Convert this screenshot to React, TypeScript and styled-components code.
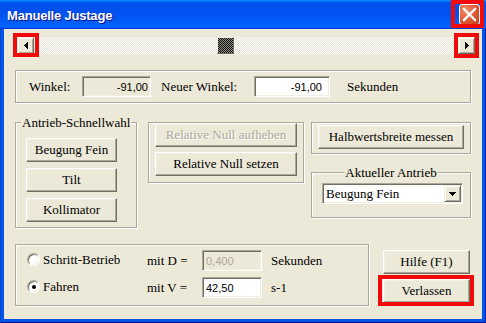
import React from 'react';
import styled, { createGlobalStyle } from 'styled-components';

const Global = createGlobalStyle`
  html, body { margin: 0; padding: 0; background: #0055ea; }
  body {
    width: 486px; height: 323px; overflow: hidden;
    font-family: "Liberation Serif", "Times New Roman", serif;
    font-size: 13px; color: #000;
  }
  * { box-sizing: border-box; }
`;

const Window = styled.div`
  position: relative;
  width: 486px;
  height: 323px;
  display: flex;
  flex-direction: column;
`;

const TitleBar = styled.div`
  flex: none;
  height: 29px;
  display: flex;
  align-items: flex-start;
  background: linear-gradient(180deg, #0997ff 0%, #0053ee 9%, #0050ee 40%, #0060fb 86%, #0063fd 92%, #005bff 95%, #003dd7 97%, #003dd7 100%);
`;

const Title = styled.span`
  margin: 8px 0 0 7px;
  font: bold 13px/16px "Liberation Sans", Arial, sans-serif;
  letter-spacing: -0.2px;
  color: #fff;
  text-shadow: 1px 1px #0f1089;
`;

const CloseButton = styled.button`
  margin: 4px 6px 0 auto;
  width: 21px;
  height: 21px;
  padding: 0;
  display: flex;
  align-items: center;
  justify-content: center;
  border: 1px solid #fff;
  border-radius: 3px;
  background: radial-gradient(circle at 30% 30%, #f0906c 0%, #e2603f 45%, #d24621 80%, #c13a17 100%);
`;

const Frame = styled.div`
  flex: 1;
  display: flex;
  padding: 0 4px 4px;
  background: #0055ea;
  box-shadow: inset 1px 0 #0a43c8, inset -1px 0 #00209c, inset 0 -1px #00138c;
`;

const Client = styled.div`
  flex: 1;
  display: flex;
  flex-direction: column;
  align-items: flex-start;
  padding: 8px 11px 0;
  background: #ece9d8;
`;

/* ---------- scrollbar ---------- */

const ScrollBar = styled.div`
  display: flex;
  align-self: stretch;
  height: 17px;
  margin: 0 -4px 0 2px;
`;

const Raised = styled.span`
  display: flex;
  align-items: center;
  justify-content: center;
  background: #ece9d8;
  border: 1px solid;
  border-color: #f1efe2 #716f64 #716f64 #f1efe2;
  box-shadow: inset 1px 1px #fff, inset -1px -1px #aca899;
`;

const ScrollArrow = styled(Raised)`
  flex: none;
  width: 17px;
  height: 17px;
`;

const Track = styled.div`
  flex: 1;
  display: flex;
  background-color: #ece9d8;
  background-image: conic-gradient(#fff 25%, #e6e3d4 0 50%, #fff 0 75%, #e6e3d4 0);
  background-size: 2px 2px;
`;

const Thumb = styled.span<{ $offset: number }>`
  width: 17px;
  height: 17px;
  margin-left: ${(p) => p.$offset}px;
  border: 1px solid;
  border-color: #f1efe2 #716f64 #716f64 #f1efe2;
  background-color: #000;
  background-image: conic-gradient(#8d8b82 25%, #111 0 50%, #8d8b82 0 75%, #111 0);
  background-size: 2px 2px;
`;

/* ---------- groups ---------- */

const Group = styled.div<{ $w: number; $h: number }>`
  position: relative;
  flex: none;
  width: ${(p) => p.$w}px;
  height: ${(p) => p.$h}px;
  border: 1px solid #aca899;
  box-shadow: inset 1px 1px #fff, 1px 1px #fff;
`;

const Legend = styled.span<{ $center?: boolean }>`
  position: absolute;
  top: -8px;
  left: ${(p) => (p.$center ? '50%' : '5px')};
  transform: ${(p) => (p.$center ? 'translateX(-50%)' : 'none')};
  padding: 0 1px;
  line-height: 15px;
  white-space: nowrap;
  background: #ece9d8;
`;

const AngleGroup = styled(Group)`
  margin-top: 16px;
  display: flex;
  align-items: center;
  padding-left: 13px;
`;

const Label = styled.span<{ $w?: number; $ml?: number }>`
  flex: none;
  width: ${(p) => (p.$w ? `${p.$w}px` : 'auto')};
  margin-left: ${(p) => p.$ml ?? 0}px;
  white-space: nowrap;
  line-height: 15px;
`;

const Field = styled.input<{ $w: number; $ghost?: boolean; $align?: 'left' | 'right'; $pad?: number }>`
  flex: none;
  width: ${(p) => p.$w}px;
  height: 21px;
  margin: 0;
  padding: 0 ${(p) => (p.$align === 'left' ? 0 : p.$pad ?? 3)}px 0 ${(p) => (p.$align === 'left' ? p.$pad ?? 3 : 0)}px;
  text-align: ${(p) => p.$align ?? 'right'};
  font: 11px "Liberation Sans", Arial, sans-serif;
  color: ${(p) => (p.disabled ? '#aca899' : '#000')};
  background: ${(p) => (p.$ghost || p.disabled ? '#ece9d8' : '#fff')};
  border: 1px solid;
  border-color: #aca899 #fff #fff #aca899;
  box-shadow: inset 1px 1px #716f64, inset -1px -1px #f1efe2;
  outline: none;
  &:disabled { -webkit-text-fill-color: #aca899; opacity: 1; }
`;

/* ---------- buttons ---------- */

const Button = styled.button<{ $w: number }>`
  flex: none;
  width: ${(p) => p.$w}px;
  height: 24px;
  padding: 0;
  font: 13px "Liberation Serif", "Times New Roman", serif;
  color: #000;
  white-space: nowrap;
  background: #ece9d8;
  border: 1px solid;
  border-color: #fff #716f64 #716f64 #fff;
  box-shadow: inset -1px -1px #aca899, inset 1px 1px #f1efe2;
  &:disabled {
    color: #aca899;
    text-shadow: 1px 1px #fff;
  }
`;

const MiddleRow = styled.div`
  display: flex;
  align-items: flex-start;
  margin-top: 19px;
`;

const QuickGroup = styled(Group)`
  display: flex;
  flex-direction: column;
  gap: 6px;
  padding: 15px 0 0 10px;
`;

const NullGroup = styled(Group)`
  margin-left: 11px;
  display: flex;
  flex-direction: column;
  gap: 5px;
  padding: 0 0 0 6px;
`;

const RightColumn = styled.div`
  display: flex;
  flex-direction: column;
  margin-left: 7px;
`;

const FwhmGroup = styled(Group)`
  padding: 2px 0 0 6px;
`;

const DriveGroup = styled(Group)`
  margin-top: 18px;
  padding: 10px 0 0 10px;
`;

const Combo = styled.div`
  width: 141px;
  height: 21px;
  display: flex;
  align-items: stretch;
  padding: 1px;
  background: #fff;
  border: 1px solid;
  border-color: #aca899 #fff #fff #aca899;
  box-shadow: inset 1px 1px #716f64, inset -1px -1px #f1efe2;
`;

const ComboText = styled.span`
  flex: 1;
  padding-left: 2px;
  line-height: 17px;
  white-space: nowrap;
`;

const DropButton = styled(Raised)`
  flex: none;
  width: 17px;
`;

/* ---------- bottom ---------- */

const BottomRow = styled.div`
  display: flex;
  align-items: flex-start;
  margin-top: 16px;
`;

const ModeGroup = styled(Group)`
  display: grid;
  grid-template-columns: 120px 55px 60px auto;
  grid-auto-rows: 21px;
  row-gap: 6px;
  align-items: center;
  padding: 5px 0 0 11px;
`;

const RadioLabel = styled.label`
  display: flex;
  align-items: center;
  gap: 3px;
  line-height: 15px;
  white-space: nowrap;
  margin-top: -2px;
`;

const Radio = styled.span<{ $checked?: boolean }>`
  position: relative;
  flex: none;
  width: 13px;
  height: 13px;
  border-radius: 50%;
  background: #fff;
  border: 1px solid;
  border-color: #aca899 #fff #fff #aca899;
  box-shadow: inset 1px 1px #716f64, inset -1px -1px #f1efe2;
  &::after {
    content: '';
    display: ${(p) => (p.$checked ? 'block' : 'none')};
    position: absolute;
    left: 3.5px;
    top: 3.5px;
    width: 4px;
    height: 4px;
    border-radius: 50%;
    background: #000;
  }
`;

const Unit = styled.span`
  margin-left: 9px;
  line-height: 15px;
  white-space: nowrap;
`;

const ButtonColumn = styled.div`
  display: flex;
  flex-direction: column;
  gap: 5px;
  margin: 6px 0 0 14px;
`;

/* ---------- annotation marks ---------- */

const Highlight = styled.span<{ $x: number; $y: number; $w: number; $h: number }>`
  position: absolute;
  left: ${(p) => p.$x}px;
  top: ${(p) => p.$y}px;
  width: ${(p) => p.$w}px;
  height: ${(p) => p.$h}px;
  border: 4px solid #f00a0a;
  pointer-events: none;
`;

const LeftGlyph = () => (
  <svg width="4" height="7" viewBox="0 0 4 7" shapeRendering="crispEdges">
    <rect x="0" y="3" width="1" height="1" fill="#000" />
    <rect x="1" y="2" width="1" height="3" fill="#000" />
    <rect x="2" y="1" width="1" height="5" fill="#000" />
    <rect x="3" y="0" width="1" height="7" fill="#000" />
  </svg>
);

const RightGlyph = () => (
  <svg width="4" height="7" viewBox="0 0 4 7" shapeRendering="crispEdges">
    <rect x="3" y="3" width="1" height="1" fill="#000" />
    <rect x="2" y="2" width="1" height="3" fill="#000" />
    <rect x="1" y="1" width="1" height="5" fill="#000" />
    <rect x="0" y="0" width="1" height="7" fill="#000" />
  </svg>
);

const DownGlyph = () => (
  <svg width="7" height="4" viewBox="0 0 7 4" shapeRendering="crispEdges">
    <rect x="0" y="0" width="7" height="1" fill="#000" />
    <rect x="1" y="1" width="5" height="1" fill="#000" />
    <rect x="2" y="2" width="3" height="1" fill="#000" />
    <rect x="3" y="3" width="1" height="1" fill="#000" />
  </svg>
);

const CloseGlyph = () => (
  <svg width="19" height="19" viewBox="0 0 19 19">
    <path d="M4 4 L15 15 M15 4 L4 15" stroke="#fff" strokeWidth="2.3" strokeLinecap="square" />
  </svg>
);

export default function App() {
  return (
    <>
      <Global />
      <Window>
        <TitleBar>
          <Title>Manuelle Justage</Title>
          <CloseButton aria-label="Schließen">
            <CloseGlyph />
          </CloseButton>
        </TitleBar>
        <Frame>
          <Client>
            <ScrollBar>
              <ScrollArrow>
                <LeftGlyph />
              </ScrollArrow>
              <Track>
                <Thumb $offset={183} />
              </Track>
              <ScrollArrow>
                <RightGlyph />
              </ScrollArrow>
            </ScrollBar>

            <AngleGroup $w={456} $h={33}>
              <Label $w={53}>Winkel:</Label>
              <Field $w={69} $ghost readOnly value="-91,00" $pad={2} />
              <Label $w={93} $ml={10}>Neuer Winkel:</Label>
              <Field $w={76} readOnly value="-91,00" $pad={7} />
              <Label $ml={17}>Sekunden</Label>
            </AngleGroup>

            <MiddleRow>
              <QuickGroup $w={122} $h={106}>
                <Legend>Antrieb-Schnellwahl</Legend>
                <Button $w={91}>Beugung Fein</Button>
                <Button $w={91}>Tilt</Button>
                <Button $w={91}>Kollimator</Button>
              </QuickGroup>

              <NullGroup $w={156} $h={61}>
                <Button $w={142} disabled>
                  Relative Null aufheben
                </Button>
                <Button $w={142}>Relative Null setzen</Button>
              </NullGroup>

              <RightColumn>
                <FwhmGroup $w={160} $h={32}>
                  <Button $w={146}>Halbwertsbreite messen</Button>
                </FwhmGroup>
                <DriveGroup $w={160} $h={46}>
                  <Legend $center>Aktueller Antrieb</Legend>
                  <Combo>
                    <ComboText>Beugung Fein</ComboText>
                    <DropButton>
                      <DownGlyph />
                    </DropButton>
                  </Combo>
                </DriveGroup>
              </RightColumn>
            </MiddleRow>

            <BottomRow>
              <ModeGroup $w={354} $h={62}>
                <RadioLabel>
                  <Radio />
                  Schritt-Betrieb
                </RadioLabel>
                <Label>mit D =</Label>
                <Field $w={60} disabled value="0,400" $align="left" $pad={3} />
                <Unit>Sekunden</Unit>

                <RadioLabel>
                  <Radio $checked />
                  Fahren
                </RadioLabel>
                <Label>mit V =</Label>
                <Field $w={60} readOnly value="42,50" $align="left" $pad={3} />
                <Unit>s-1</Unit>
              </ModeGroup>

              <ButtonColumn>
                <Button $w={87}>Hilfe (F1)</Button>
                <Button $w={87}>Verlassen</Button>
              </ButtonColumn>
            </BottomRow>
          </Client>
        </Frame>

        <Highlight $x={451} $y={0} $w={33} $h={28} />
        <Highlight $x={13} $y={33} $w={26} $h={24} />
        <Highlight $x={454} $y={33} $w={25} $h={25} />
        <Highlight $x={378} $y={275} $w={96} $h={31} />
      </Window>
    </>
  );
}
